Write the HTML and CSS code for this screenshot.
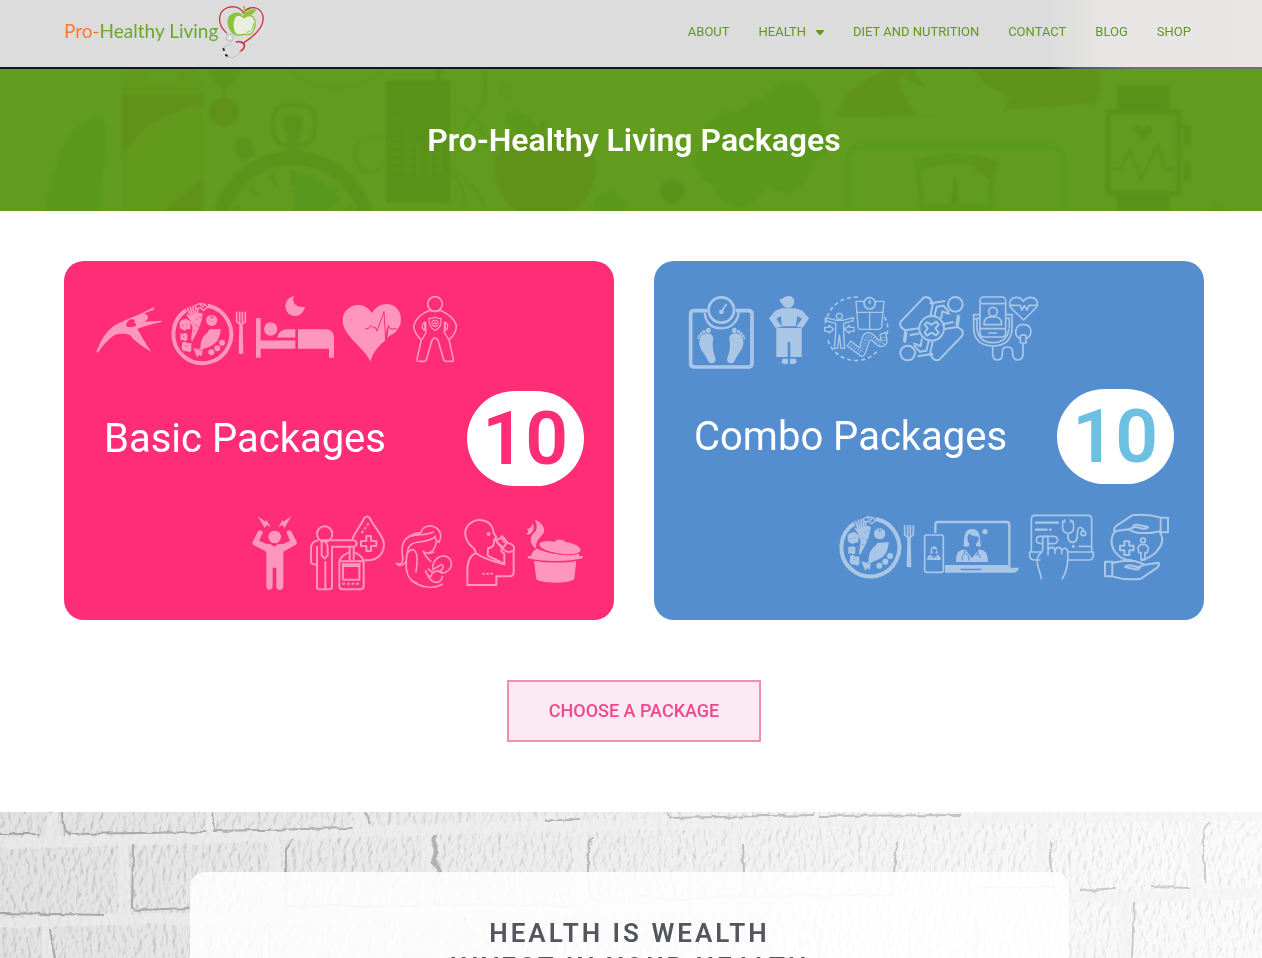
FILE: index.html
```html
<!DOCTYPE html>
<html lang="en">
<head>
    <meta charset="utf-8" />
    <meta name="viewport" content="width=device-width, initial-scale=1" />
    <title>Pro-Healthy Living Packages</title>
    <link rel="stylesheet" href="styles.css">
</head>
<body>

<!-- header -->
<header class="header">
    <div class="container header-inner">
        <a class="logo" href="#">
            <span class="logo-text"><span class="logo-pro">Pro-</span>Healthy Living</span>
            <svg class="logo-mark" viewBox="505 15 140 165" aria-hidden="true">
                <g fill="none" stroke-linecap="round">
                    <path stroke="#c93a40" stroke-width="4" d="M530 99C512 82 505 62 512 43C520 22 548 15 568 25C574 28 578 33 581 39C590 24 610 18 625 27C643 39 644 63 632 82C620 100 603 116 582 128"/>
                    <path stroke="#c93a40" stroke-width="5" d="M560 126C571 123 584 128 584 138C583 145 578 150 572 154"/>
                    <path stroke="#b9bcc0" stroke-width="3" d="M541 122C546 132 544 132 532 136C524 139 521 144 522 149M572 154C562 171 548 176 535 171L528 166M530 99L540 112"/>
                    <path stroke="#23252d" stroke-width="6" d="M521 147L522 150M528 165L531 167"/>
                </g>
                <circle cx="540" cy="113" r="11" fill="#dfe1e3" stroke="#b4b8bc" stroke-width="3"/>
                <circle cx="540" cy="113" r="5" fill="#f7f7f7" stroke="#c2c5c8" stroke-width="2"/>
                <path fill="#e8efdf" stroke="#8cc23e" stroke-width="4" d="M582 53C569 41 554 44 547 55C539 69 545 91 558 102C567 109 574 103 583 103C593 103 599 108 607 98C616 86 620 67 611 53C603 43 592 46 582 53Z"/>
                <path fill="#8cc23e" d="M560 38C541 38 531 54 533 70C535 89 549 105 563 109C552 96 547 68 556 54C561 46 570 45 579 48C575 40 568 37 560 38Z"/>
                <path fill="#8cc23e" d="M584 47C588 31 601 27 619 28C614 43 600 48 584 47ZM580 51C583 37 582 28 579 18L585 19C588 31 587 41 584 51Z"/>
                <path fill="none" stroke="#8cc23e" stroke-width="3" d="M611 70C611 85 601 97 589 97"/>
            </svg>
        </a>
        <nav class="nav">
            <a href="#">ABOUT</a>
            <a href="#">HEALTH <svg class="caret" viewBox="0 0 8 5" aria-hidden="true"><path d="M1 0H7Q8 0 8 1L4.500 5H3.500L0 1Q0 0 1 0Z"/></svg></a>
            <a href="#">DIET AND NUTRITION</a>
            <a href="#">CONTACT</a>
            <a href="#">BLOG</a>
            <a href="#">SHOP</a>
        </nav>
    </div>
</header>

<!-- title banner -->
<section class="banner">
    <svg class="banner-art" viewBox="0 0 1262 142" preserveAspectRatio="xMidYMid slice" aria-hidden="true">
        <path fill="#5a991b" d="M45 142C53 100 64 68 78 56Q94 51 102 44L104 54Q109 60 106 75Q102 104 101 142Z"/>
        <path fill="#61991a" d="M133 0H194Q202 11 203 24V142H122V24Q123 12 133 0Z"/>
        <path fill="#60921a" d="M122 26H203V36C165 40 135 62 122 88ZM203 110V142H164Z"/>
        <rect x="147" y="1" width="31" height="14" rx="6" fill="#619c1f"/>
        <path fill="#5c981b" d="M209 0H240Q240 13 224 21Q209 13 209 0Z"/>
        <path stroke="#5a941b" stroke-width="2" d="M224 20V58"/>
        <circle cx="224" cy="43" r="15" fill="#60921a"/>
        <g fill="none" stroke="#5b941b">
            <rect x="273" y="36" width="42" height="40" rx="14" stroke-width="4"/>
            <circle cx="293" cy="164" r="75" stroke-width="14"/>
            <path stroke-width="4" d="M293 100V117M271 105L276 117M250 119L258 127M316 105L311 117M338 119L329 128M234 138L243 142M353 138L344 142"/>
        </g>
        <path fill="#59981f" d="M294 142V104Q322 105 340 130L326 142Z"/>
        <path fill="#5b941b" d="M284 47H302V63H299V86H287V63H284ZM236 73Q244 65 250 70L256 86L242 92Q233 83 236 73Z"/>
        <path fill="none" stroke="#5b981e" stroke-width="1" d="M290 0C310 25 360 25 383 0"/>
        <path fill="none" stroke="#5b981e" stroke-width="3" d="M484 0C490 30 480 45 462 62M450 37C472 37 484 55 486 80M386 68C368 65 356 72 355 84C354 100 369 111 386 94M450 102C462 115 464 125 467 142M450 98C475 115 481 126 486 142"/>
        <path stroke="#5a921b" stroke-width="5" d="M438 0V12"/>
        <rect x="386" y="11" width="64" height="123" rx="3" fill="#589218"/>
        <path fill="none" stroke="#5c951b" stroke-width="5" stroke-dasharray="7 4" d="M393 77H442M393 85H442M393 93H442M393 101H442"/>
        <path fill="none" stroke="#5e941d" stroke-width="4" stroke-dasharray="3 4" d="M397 48V75M406 62V75"/>
        <ellipse cx="505" cy="20" rx="7" ry="9" fill="#61991a"/>
        <path fill="#60921a" d="M545 70C570 56 592 67 595 92C599 118 577 150 561 145Q545 139 529 145C509 145 492 117 495 95C499 66 522 58 545 70Z"/>
        <path fill="#5a991b" d="M504 43C525 42 539 49 538 69C519 69 507 61 504 43ZM593 142Q593 123 609 123Q625 123 625 142Z"/>
        <path stroke="#60921a" stroke-width="4" d="M542 70V52"/>
        <g fill="#5a991a">
            <circle cx="791" cy="42" r="29"/><circle cx="767" cy="66" r="36"/><circle cx="733" cy="72" r="30"/>
            <circle cx="717" cy="94" r="22"/><circle cx="739" cy="112" r="26"/><circle cx="783" cy="92" r="30"/>
            <circle cx="810" cy="73" r="19"/><circle cx="790" cy="109" r="14"/>
        </g>
        <circle cx="672" cy="122" r="12" fill="#5c921b"/>
        <path fill="#60931a" d="M838 48C839 28 858 12 890 0H1100Q1102 23 1095 34L925 47Z"/>
        <path fill="#619c1f" d="M900 6C900 25 910 38 918 47L1002 42Q1008 34 1010 28C992 20 980 12 974 0H911Q920 10 926 18Q915 15 900 6Z"/>
        <rect x="848" y="77" width="216" height="90" rx="13" fill="none" stroke="#5a9a20" stroke-width="5"/>
        <path fill="#5a971b" d="M914 92Q955 76 997 92L991 142H921ZM920 101L925 135H986L991 101Q955 89 920 101Z"/>
        <path fill="#5b921b" d="M955 106L959 134H951Z"/>
        <path fill="#60921a" d="M976 88L995 93L991 112Q982 103 976 104Z"/>
        <path fill="#589218" d="M1117 16H1169V142H1117Z"/>
        <rect x="1108" y="43" width="71" height="81" fill="#619c1f" stroke="#5b921b" stroke-width="5"/>
        <path fill="#5b941b" d="M1183 56H1191V76H1183ZM1183 92H1191V113H1183ZM1143 72L1134 62Q1134 56 1139 56L1143 59L1147 56Q1152 56 1152 62Z"/>
        <path fill="none" stroke="#5b961b" stroke-width="3" d="M1112 100H1121L1130 81L1141 110L1158 76L1165 100H1175"/>
        <ellipse cx="1218" cy="143" rx="10" ry="8" fill="#61991a"/>
    </svg>
    <h1 class="banner-title">Pro-Healthy Living Packages</h1>
</section>

<!-- packages -->
<main class="container packages">
    <div class="cards">
        <a class="card card-basic" href="#">
            <span class="icons">
                <svg width="66" height="75" viewBox="33 33 198 225" aria-hidden="true">
                    <path fill="currentColor" d="M34 201C44 172 64 135 91 120C114 107 154 94 207 66L208 73C196 79 184 83 174 87C184 86 191 93 189 99C188 104 182 107 178 110L230 107V111C203 117 177 124 157 132C168 151 182 176 199 200C175 186 151 171 135 150C121 145 104 145 90 149C69 163 51 183 39 203Z"/>
                    <path fill="#ff2c76" d="M128 111C130 104 136 101 142 103C149 103 151 109 148 113C154 115 155 121 150 124L143 126H127C122 120 123 113 128 111Z"/>
                </svg>
                <svg width="76" height="75" viewBox="258 33 228 225" aria-hidden="true">
                    <g id="plate" fill="none" stroke="currentColor">
                        <path stroke-width="12" d="M304 75A87 87 0 1 0 368 62"/>
                        <path stroke-width="4" d="M330 62L344 55L360 58L367 67L356 76L345 68L333 72ZM344 56L350 65M358 58L352 68"/>
                        <path stroke-width="5" stroke-linecap="round" d="M308 70C312 79 315 91 318 105M316 66C319 80 321 94 323 109M324 64C325 80 326 94 327 109M332 67C331 83 331 96 330 108M339 74C337 86 334 98 331 109M307 90Q315 100 322 113M318 113L328 128"/>
                        <path fill="currentColor" stroke="none" d="M331 88Q344 79 353 87C352 112 336 144 322 169L318 165C322 140 324 106 331 88ZM284 110L292 104L303 101L316 109V132L306 133L299 137L288 132L284 126ZM286 145L293 147L298 143L307 147V165L299 168L293 164L286 167ZM292 171L301 170L307 175L319 174V197L313 202L306 199L294 198L290 190ZM407 131C406 153 399 171 383 180C374 186 364 188 354 193L350 214L342 209L337 218L325 189L341 193L347 187C346 170 352 153 367 143L372 135Q379 131 387 133Z"/>
                        <g fill="currentColor" stroke="none"><circle cx="380" cy="106" r="17"/><circle cx="411" cy="173" r="9"/><circle cx="397" cy="190" r="9"/><circle cx="379" cy="202" r="9"/></g>
                        <path stroke="var(--card)" stroke-width="2" d="M333 101L339 103M342 96L350 98M328 119L335 121M338 124L345 126M325 137L331 139M374 94L379 100L388 93M379 99L380 90M374 106V108M385 107V110M291 121H296M304 119H307M294 155H299M301 184H306M341 194Q347 197 354 194"/>
                        <path stroke-width="5" stroke-linecap="round" d="M455 82V110Q468 124 481 110V82M464 82V111M472 82V111"/>
                        <path fill="currentColor" stroke="none" d="M463 117H473L475 205Q468 210 461 204Z"/>
                    </g>
                </svg>
                <svg width="77" height="75" viewBox="-72 33 231 225" aria-hidden="true">
                    <path fill="currentColor" d="M-72 99H-58V166H45V133H139Q162 135 162 158V218H147V191H-58V218H-72ZM42 33C34 49 45 69 75 66C71 83 59 93 46 93C27 93 16 78 16 63C17 47 27 36 42 33Z"/>
                    <circle cx="-28" cy="132" r="20" fill="currentColor"/>
                    <path fill="currentColor" d="M-9 158Q-2 133 22 133H46V158Z"/>
                    <path stroke="#ff2c76" stroke-width="8" d="M50 132V192"/>
                    <path stroke="#ff2c76" stroke-width="7" d="M-58 162H48"/>
                </svg>
                <svg width="62" height="75" viewBox="186 33 186 225" aria-hidden="true">
                    <path fill="currentColor" d="M271 230C257 190 187 154 188 105C188 61 249 40 276 84C301 40 363 53 363 104C363 121 352 138 342 145L328 153L315 167C292 186 279 203 271 230Z"/>
                    <path fill="none" stroke="#ff2c76" stroke-width="3" d="M255 132L266 130L273 121L280 129L285 126L291 138L312 80L317 165L325 121L331 132H352"/>
                    <path stroke="#ff2c76" stroke-width="5" d="M319 162L323 130"/>
                </svg>
                <svg width="44" height="75" viewBox="399 33 132 225" aria-hidden="true">
                    <g fill="none" stroke="currentColor" stroke-width="5" stroke-linejoin="round">
                        <circle cx="465" cy="57" r="22"/>
                        <path d="M450 76C431 83 409 98 402 120C399 135 414 157 424 164L411 223Q410 229 417 229H434Q438 229 439 224L456 166Q465 151 474 166L491 224Q492 229 497 229H516Q521 228 520 223L507 164C521 153 530 135 529 120C521 99 500 84 480 76Q465 83 450 76Z"/>
                        <path stroke-width="4" d="M434 111Q419 125 434 137ZM437 111L438 143L426 164M496 111Q511 125 496 137ZM493 111V143L506 164"/>
                        <path stroke-width="4" d="M447 100Q458 101 465 96Q472 101 483 100C484 121 480 129 465 136C450 129 446 119 447 100Z"/>
                        <circle cx="465" cy="115" r="10" stroke-width="3"/>
                        <path stroke-width="3" d="M457 116H473M461 121H469M461 111H469"/>
                    </g>
                </svg>
            </span>
            <span class="card-body">
                <span class="card-title">Basic Packages</span>
                <span class="count">10</span>
            </span>
            <span class="icons icons-end">
                <svg width="48" height="75" viewBox="36 45 144 225" aria-hidden="true">
                    <circle cx="104" cy="111" r="19" fill="currentColor"/>
                    <path fill="currentColor" d="M53 49L77 65L79 59L92 82L80 75L74 84L67 71ZM154 49L130 65L128 59L115 82L127 75L134 84L141 71ZM54 94Q62 87 69 96L58 122L80 132Q93 129 102 140Q114 129 129 132L150 122L139 96Q145 87 154 94L170 125Q172 133 165 136L130 155V261Q128 270 119 270Q110 269 109 260V203H98V260Q96 269 88 270Q80 269 79 261V155L42 136Q36 133 38 125Z"/>
                </svg>
                <svg width="75" height="75" viewBox="210 45 225 225" aria-hidden="true">
                    <g fill="none" stroke="currentColor" stroke-width="6" stroke-linejoin="round">
                        <circle cx="254" cy="102" r="23"/>
                        <path d="M243 121H341Q350 123 350 131Q349 139 341 140H276V262Q276 268 266 268H256V184M256 268H238Q231 268 231 260V139M231 193Q212 195 213 183V143Q214 124 235 121M245 121V166L254 176L263 166V139L257 124"/>
                        <path d="M337 117C347 94 362 76 373 54Q381 45 389 54C401 80 431 107 432 132C433 163 408 185 374 180M329 140V184H341V140M298 184C302 170 311 164 326 158M345 158C360 164 367 171 371 184M298 184H371V260Q370 268 360 268H308Q299 268 298 260ZM305 193H362M309 198H358V239H309ZM379 108H393V123H409V138H393V153H379V138H363V123H379Z"/>
                        <path stroke-dasharray="8 6" d="M386 70L362 103M307 251H360"/>
                    </g>
                </svg>
                <svg width="59" height="75" viewBox="465 45 177 225" aria-hidden="true">
                    <g fill="none" stroke="currentColor" stroke-width="5" stroke-linecap="round">
                        <path d="M543 98C546 80 570 72 588 83C604 94 606 112 597 127C590 124 586 116 585 110C568 128 544 121 520 130C501 137 502 158 500 174C498 190 489 197 477 196L468 190C487 196 490 184 488 170C483 142 489 119 508 110C525 102 553 108 580 96M543 98C520 99 496 110 490 130M589 127C585 148 578 157 564 159M550 155C559 162 572 160 581 157M520 149C502 149 497 168 499 188C497 220 506 241 530 249M520 149C531 156 533 170 531 188Q530 204 528 216"/>
                        <path d="M550 154Q560 175 573 184M579 210C575 179 602 160 622 171C637 180 638 199 626 210C617 221 604 220 600 213C611 207 612 197 604 193C593 202 587 202 581 207M565 207L578 218L572 230L561 223L556 211C564 228 571 247 590 247C600 246 607 238 607 230M578 218L592 212L607 220M513 240C543 265 583 267 607 253"/>
                    </g>
                </svg>
                <svg width="52" height="75" viewBox="672 45 156 225" aria-hidden="true">
                    <g fill="none" stroke="currentColor" stroke-width="6" stroke-linejoin="round">
                        <path d="M706 158Q707 148 697 141C673 121 668 89 689 71C714 51 757 58 761 98L769 112L762 120Q765 143 744 145L743 166C760 177 783 184 793 193V160Q777 154 788 144M706 158C729 177 768 186 793 193M706 160C690 166 682 183 682 215V255H769V229H810Q820 229 821 218V151C826 139 816 131 804 129M768 121L782 114L786 108L802 127L790 142L778 134Z"/>
                        <path d="M769 125L792 150Q809 162 819 151M785 113L795 129"/>
                        <path stroke-dasharray="7 5" d="M727 221H763"/>
                    </g>
                    <circle cx="746" cy="102" r="6" fill="currentColor"/>
                </svg>
                <svg width="58" height="75" viewBox="858 45 174 225" aria-hidden="true">
                    <path fill="currentColor" d="M885 60C899 63 917 80 912 97C904 112 884 121 889 147C866 132 870 108 882 99C894 87 891 73 885 60ZM878 68C883 80 881 94 872 101Q866 105 858 102C867 97 867 92 859 88C868 86 877 80 878 68Z"/>
                    <path fill="currentColor" d="M863 168H873Q877 152 891 146C925 161 970 169 1017 161V168H1028V174C993 186 899 186 863 174ZM882 182C915 189 976 190 1009 183L1003 237C993 251 902 252 889 238Z"/>
                    <path fill="currentColor" stroke="var(--card)" stroke-width="3" d="M944 124Q947 117 959 117Q972 117 975 124C1003 128 1025 140 1023 153C1013 168 973 166 943 159C911 153 894 141 897 130C905 120 926 121 944 124Z"/>
                </svg>
            </span>
        </a>

        <a class="card card-combo" href="#">
            <span class="icons">
                <svg width="70" height="75" viewBox="27 33 210 225" aria-hidden="true">
                    <g fill="none" stroke="currentColor">
                        <path stroke-width="11" d="M82 77H43Q32 77 32 88V235Q32 246 43 246H205Q216 246 216 235V88Q216 77 205 77H167"/>
                        <circle cx="124" cy="75" r="38" stroke-width="8"/>
                        <path stroke-width="7" d="M74 84C78 117 99 130 124 130C153 130 173 111 176 83"/>
                        <path stroke-width="5" stroke-linecap="round" d="M125 79L139 58"/>
                    </g>
                    <circle cx="124" cy="81" r="7" fill="currentColor"/>
                    <g id="foot" fill="currentColor">
                        <path d="M82 145C97 145 102 156 99 168C96 185 100 203 107 222Q107 234 96 235Q86 235 81 221C73 203 55 190 58 167Q62 145 82 145Z"/>
                        <ellipse cx="85" cy="136" rx="7" ry="8"/><circle cx="72" cy="140" r="5"/><circle cx="64" cy="146" r="4"/><circle cx="58" cy="153" r="4"/><circle cx="55" cy="160" r="3"/>
                    </g>
                    <use href="#foot" transform="translate(248 0) scale(-1 1)"/>
                </svg>
                <svg width="45" height="75" viewBox="267 33 135 225" aria-hidden="true">
                    <path fill="currentColor" d="M298 42C308 45 312 33 326 33C337 33 343 41 343 50Q341 68 325 69Q309 67 307 56Q299 52 298 42ZM305 70H347L367 77L387 100L368 128L349 125L366 101L352 93L347 124H305L303 93L289 101L306 125L287 129L267 100L286 77ZM289 129H365V216H331V171H323V216H289ZM307 221H324V236Q312 240 305 233ZM330 221H348L349 233Q343 240 330 236Z"/>
                </svg>
                <svg width="65" height="75" viewBox="432 33 195 225" aria-hidden="true">
                    <g fill="none" stroke="currentColor" stroke-width="4" stroke-linejoin="round">
                        <path stroke-width="5" stroke-dasharray="12 9" d="M534 36Q451 37 435 119M444 166C467 233 551 247 594 196M613 96Q631 125 618 155"/>
                        <circle cx="478" cy="94" r="9"/>
                        <path d="M436 98L469 106H488L520 98V107L491 115V143L494 190H483L478 150L473 190H463L467 143V115L436 107ZM434 127H447V121L461 133L447 145V139H434ZM522 127H508V121L494 133L508 145V139H522Z"/>
                        <path d="M553 49H528L534 126Q535 133 543 133H596Q604 132 605 126L612 49H585M530 82H609M569 82V132"/>
                        <circle cx="569" cy="55" r="17" stroke-width="5"/>
                        <path stroke-width="5" d="M569 45V57"/>
                        <path d="M512 168L502 183L539 211Q551 219 557 202L566 173Q571 159 580 170L590 179C603 190 620 183 621 168L617 142L600 149L604 165Q600 169 594 163L582 150C567 137 551 142 546 161L539 188Z"/>
                        <path stroke-dasharray="2 6" stroke-width="12" d="M513 181L543 201L555 171Q564 147 579 157L597 174Q612 179 613 153"/>
                    </g>
                </svg>
                <svg width="64" height="75" viewBox="657 33 192 225" aria-hidden="true">
                    <g fill="none" stroke="currentColor" stroke-width="6" stroke-linejoin="round">
                        <circle cx="755" cy="130" r="37"/>
                        <g id="ribbon">
                            <path d="M796 48L752 55L755 48Q746 32 731 38L663 109Q657 119 664 127L676 136L717 130M676 137L671 170M759 54L751 93M783 101L787 79L809 87M763 93L770 65L790 62L807 81M820 111L790 117M834 89L829 121"/>
                            <circle cx="826" cy="58" r="22"/>
                        </g>
                        <use href="#ribbon" transform="rotate(180 754.500 131)"/>
                        <path d="M741 112L755 119L769 110L776 119L766 130L776 143L768 151L755 143L741 152L734 142L743 130L734 118Z"/>
                    </g>
                </svg>
                <svg width="65" height="75" viewBox="879 33 195 225" aria-hidden="true">
                    <g fill="none" stroke="currentColor" stroke-width="5" stroke-linejoin="round">
                        <rect x="900" y="36" width="77" height="120" rx="11"/>
                        <path d="M900 56H977M900 131H977M925 144H951M912 119Q912 100 927 96H951Q965 101 965 119Z"/>
                        <circle cx="939" cy="80" r="13"/>
                        <path d="M899 89H881V130C881 164 903 183 938 183C975 183 996 163 996 130V89H979M899 100H891V130M979 100H988V130M881 102H891V131C895 163 915 173 938 173C966 173 985 158 987 131M938 183V209Q939 225 953 225Q966 224 967 209V199Q968 186 982 186Q997 186 998 199V209Q1000 225 1014 225Q1028 224 1029 209V176"/>
                        <path d="M1031 105L999 75C981 60 989 38 1009 37Q1023 37 1030 49Q1038 37 1053 37C1074 40 1079 61 1061 75ZM990 61H1020L1026 75L1033 62L1041 75L1047 61H1071"/>
                        <path d="M1020 161C1000 151 1004 118 1030 118C1057 119 1060 151 1038 161M1021 174V153Q1030 146 1038 153V174Z"/>
                    </g>
                </svg>
            </span>
            <span class="card-body">
                <span class="card-title">Combo Packages</span>
                <span class="count">10</span>
            </span>
            <span class="icons icons-end">
                <svg width="75" height="75" viewBox="258 50 225 225" aria-hidden="true"><use href="#plate"/></svg>
                <svg width="95" height="75" viewBox="282 45 285 225" aria-hidden="true">
                    <g fill="none" stroke="currentColor">
                        <path stroke-width="7" d="M316 99V73Q316 66 323 66H530Q538 66 538 74V198"/>
                        <rect x="284" y="105" width="56" height="112" rx="6" stroke-width="5"/>
                    </g>
                    <path fill="currentColor" d="M345 195H541V203H567Q565 218 548 218H345V206H390L394 211H451L456 206H345Z"/>
                    <circle cx="465" cy="95" r="8" fill="currentColor"/>
                    <g id="doctor" fill="currentColor">
                        <path d="M400 139C403 124 401 109 407 98Q412 87 426 87Q439 87 446 98C451 109 450 125 453 139Q442 141 438 137V131Q447 122 446 110Q429 109 416 101Q410 112 413 123L418 132V137Q412 142 400 139ZM406 148L426 174L447 148Q465 151 469 160Q474 169 474 186H378Q378 169 382 160Q388 150 406 148Z"/>
                        <path fill="none" stroke="#548ecf" stroke-width="3" d="M404 148V160Q393 168 397 181M407 160Q420 166 416 182M443 150V164M437 168Q444 157 450 168V174"/>
                    </g>
                    <use href="#doctor" transform="translate(133 102) scale(.42)"/>
                </svg>
                <svg width="65" height="75" viewBox="597 45 195 225" aria-hidden="true">
                    <g fill="none" stroke="currentColor" stroke-width="5" stroke-linejoin="round" stroke-linecap="round">
                        <path d="M604 156V57Q604 46 615 46H774Q785 46 785 57V156M635 156H599V166Q600 180 613 180H630M713 156H790V166Q789 180 776 180H714M633 131Q619 130 619 120Q620 108 632 109H670Q683 110 683 120Q682 131 670 131H656M748 139H781"/>
                        <path stroke-width="7" d="M618 68H684M618 89H650M660 89H662"/>
                        <path d="M704 63H699Q695 86 702 95Q715 106 727 95Q735 84 728 63H722M704 60V66M722 60V66M714 102V114Q716 127 728 127Q739 126 741 114L743 91Q746 80 754 83Q760 86 760 92"/>
                        <circle cx="760" cy="100" r="7"/><circle cx="730" cy="139" r="2"/>
                        <path d="M634 236C631 214 618 195 622 175C625 162 635 158 638 151V117Q639 108 646 108Q654 109 654 117V164M654 152Q656 142 665 142Q675 143 675 152V160M675 151Q680 140 690 143Q695 146 695 153V161M695 150Q710 139 713 153C716 187 711 214 697 236"/>
                    </g>
                </svg>
                <svg width="65" height="75" viewBox="822 45 195 225" aria-hidden="true">
                    <g fill="none" stroke="currentColor" stroke-width="6" stroke-linejoin="round">
                        <g id="palm">
                            <path d="M993 53Q951 40 906 46L857 79Q850 87 853 94L895 88Q911 96 926 99H950C972 100 974 94 993 94M908 80Q914 70 927 75L954 81Q948 88 939 86L918 81Q910 80 895 89M992 53H1014V97H992Z"/>
                        </g>
                        <use href="#palm" transform="rotate(180 919.500 141)"/>
                        <path d="M858 93C842 105 841 132 852 151C864 171 883 182 907 181M933 181C952 176 969 169 982 152C998 133 1001 113 989 96M883 124H898V137H911V151H898V165H883V151H870V137H883Z"/>
                        <circle cx="939" cy="121" r="7" stroke-width="5"/>
                        <path stroke-width="5" d="M931 134H947L955 142L952 158H945V179H933V158H926L924 142Z"/>
                    </g>
                </svg>
            </span>
        </a>
    </div>
    <a class="btn" href="#">CHOOSE A PACKAGE</a>
</main>

<!-- white brick wall -->
<section class="wall">
    <svg class="wall-art" viewBox="0 0 1262 146" preserveAspectRatio="xMidYMin slice" aria-hidden="true">
        <defs>
            <filter id="plaster" x="0" y="0" width="100%" height="100%">
                <feTurbulence type="fractalNoise" baseFrequency=".2 .11" numOctaves="4" seed="6"/>
                <feDiffuseLighting surfaceScale="2" diffuseConstant="1.150" lighting-color="#fff">
                    <feDistantLight azimuth="200" elevation="60"/>
                </feDiffuseLighting>
            </filter>
            <filter id="rough" filterUnits="userSpaceOnUse" x="0" y="-10" width="1262" height="166">
                <feTurbulence type="fractalNoise" baseFrequency=".09" numOctaves="2" result="noise"/>
                <feDisplacementMap in="SourceGraphic" in2="noise" scale="5" xChannelSelector="R" yChannelSelector="G"/>
                <feGaussianBlur stdDeviation=".6"/>
            </filter>
            <linearGradient id="shade">
                <stop offset="0" stop-color="#e2e2e2"/>
                <stop offset=".5" stop-color="#eaeaea"/>
                <stop offset="1" stop-color="#f8f8f8"/>
            </linearGradient>
            <linearGradient id="fade">
                <stop offset="0" stop-color="#fff" stop-opacity="0"/>
                <stop offset="1" stop-color="#fff" stop-opacity=".45"/>
            </linearGradient>
        </defs>
        <rect width="1262" height="146" fill="url(#shade)"/>
        <rect class="grain" width="1262" height="146" filter="url(#plaster)"/>
        <g fill="none" filter="url(#rough)">
            <path class="mortar" d="M0 31L60 30L210 26L355 20L490 15L640 13L900 8L1262 3M0 111L130 107L300 106L420 101L570 99L750 91L1000 88L1262 81M52 0V28M211 0V22M360 0V15M124 32V103M275 25V100M427 20V98M580 16V95M733 14V92M893 12V88M1042 10V87M1196 8V82M47 112V146M198 109V146M1126 88V146"/>
            <path stroke="#a6a6a6" stroke-width="2" d="M62 0L64 18L70 22L205 20M213 0L215 19L352 16M365 0L370 12M0 22L40 22M133 32L132 97L139 98L190 96M0 101L105 103M286 60V38L293 27M588 60V34L593 24M667 0L670 6L814 3M818 4L960 3M743 32L744 60M897 29L894 60M1050 28L1052 60M1080 79L1115 76M1150 75L1190 76M1204 72V18L1210 10M1134 90L1132 146M50 118L55 146M545 8L580 8"/>
            <path stroke="#a4a4a4" stroke-width="5" d="M435 24V50L440 62"/>
            <path stroke="#cbcbcb" stroke-width="2" d="M286 60V94H420M435 60V92L575 94M588 60Q588 87 600 90M640 82L670 88L742 84V60M744 60V84L892 83V60M1052 60V75H980M210 120V146M820 115V146M675 115V146M977 105V146"/>
        </g>
        <rect width="1262" height="146" fill="url(#fade)"/>
    </svg>
    <div class="wall-box">
        <h2 class="wall-title">HEALTH IS WEALTH<br>INVEST IN YOUR HEALTH</h2>
    </div>
</section>

</body>
</html>
```
FILE: styles.css
```css
* { box-sizing: border-box; }
html, body { height: 100%; }
body { margin: 0; display: flex; flex-direction: column; overflow: hidden; background: #fff; font-family: Roboto, "Liberation Sans", sans-serif; }
a { text-decoration: none; }

/* the centred column, 1140px of content */
.container { width: 100%; max-width: 1146px; margin: 0 auto; padding-left: 6px; }

/* header */
.header { flex: none; height: 69px; background: linear-gradient(90deg, #dcdcdc 83%, #e7e6e4 88%, #e9e7e5); border-bottom: 2px solid; border-image: linear-gradient(90deg, #10181a 83%, #4b5560 85%, #77706a 90%) 1; }
.header-inner { display: flex; justify-content: space-between; align-items: flex-start; }
.logo { display: flex; align-items: center; padding-top: 5px; }
.logo-text { padding-bottom: 5px; font-family: Lato, "Open Sans", sans-serif; font-size: 19px; font-weight: 400; color: #6aa72b; white-space: nowrap; }
.logo-pro { color: #fb7a2b; }
.logo-mark { width: 47px; height: 55px; }
.nav { display: flex; gap: 29px; padding: 22px 13px 0 0; }
.nav a { display: flex; align-items: center; gap: 10px; font-size: 13px; line-height: 20px; color: #5f9918; white-space: nowrap; }
.caret { width: 8px; height: 5px; fill: #5f9918; }

/* title banner */
.banner { position: relative; flex: none; height: 142px; display: flex; justify-content: center; align-items: center; padding-left: 6px; background: #619c1f; overflow: hidden; }
.banner-art { position: absolute; left: 0; top: 0; width: 100%; height: 100%; filter: blur(1px); }
.banner-title { position: relative; margin: 0; font-size: 32px; font-weight: 600; line-height: 32px; color: #fff; }

/* package cards */
.packages { flex: none; display: flex; flex-direction: column; align-items: center; padding-top: 50px; padding-bottom: 70px; }
.cards { width: 100%; display: grid; grid-template-columns: 1fr 1fr; gap: 40px; }
.card { display: flex; flex-direction: column; border-radius: 20px; color: #fff; background: var(--card); }
.card-basic { --card: #ff2c76; --count: #ff2c76; padding: 35px 30px 30px 32px; }
.card-combo { --card: #548ecf; --count: #6dc0e2; padding: 35px 30px 30px 35px; }
.icons { display: flex; gap: 9px; opacity: .5; }
.icons svg { flex: none; overflow: visible; }
.icons-end { justify-content: flex-end; gap: 10px; }
.card-combo .icons { gap: 10px; }
.card-combo .icons-end { padding-right: 5px; }
.card-body { display: flex; justify-content: space-between; align-items: center; margin: 20px 0 29px; padding-left: 8px; }
.card-combo .card-body { margin: 18px 0 31px; padding-left: 5px; }
.card-title { font-size: 40px; line-height: 48px; white-space: nowrap; }
.count { padding: 0 16px 0 15px; border-radius: 48px; background: #fff; font-size: 75px; font-weight: 600; line-height: 95px; color: var(--count); }

.btn { margin-top: 60px; padding: 19px 40px; border: 2px solid #f28cb8; background: #fceaf2; font-size: 18px; font-weight: 500; line-height: 20px; color: #f0478f; }

/* brick wall */
.wall { position: relative; flex: 1; min-height: 0; padding: 60px 15px 0 12px; background: #e6e6e6; overflow: hidden; }
.wall-art { position: absolute; left: 0; top: 0; width: 100%; height: 100%; }
.grain { mix-blend-mode: multiply; opacity: .6; }
.mortar { stroke: #ebebeb; stroke-width: 11px; opacity: .7; }
.wall-box { position: relative; max-width: 879px; margin: 0 auto; padding: 44px 20px 60px; border-radius: 15px; background: rgba(255, 255, 255, .85); }
.wall-title { margin: 0; font-size: 26px; font-weight: 600; line-height: 34px; letter-spacing: 3px; text-align: center; color: #54565e; }
```
